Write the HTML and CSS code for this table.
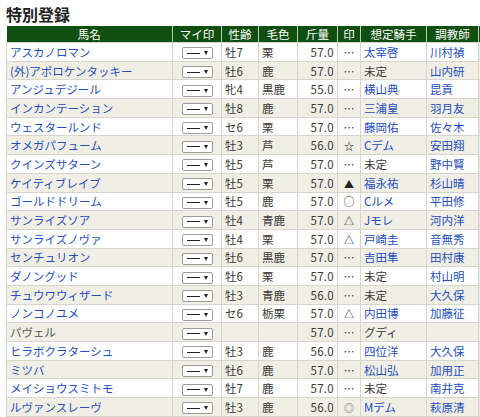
FILE: index.html
```html
<!DOCTYPE html>
<html lang="ja">
<head>
<meta charset="utf-8">
<link rel="stylesheet" href="styles.css">
</head>
<body>
<h1 class="title">特別登録</h1>
<table class="entries">
<colgroup>
<col class="c-name"><col class="c-my"><col class="c-sex"><col class="c-coat"><col class="c-wt"><col class="c-mark"><col class="c-jockey"><col class="c-trainer"><col class="c-tag">
</colgroup>
<thead>
<tr><th>馬名</th><th>マイ印</th><th>性齢</th><th>毛色</th><th>斤量</th><th>印</th><th>想定騎手</th><th>調教師</th><th></th></tr>
</thead>
<tbody>
<tr><td class="name"><a>アスカノロマン</a></td><td class="my"><span class="sel"><i></i><b></b></span></td><td>牡7</td><td>栗</td><td class="wt">57.0</td><td class="mk">…</td><td><a>太宰啓</a></td><td><a>川村禎</a></td><td class="tag cyan"></td></tr>
<tr><td class="name"><a>(外)アポロケンタッキー</a></td><td class="my"><span class="sel"><i></i><b></b></span></td><td>牡6</td><td>鹿</td><td class="wt">57.0</td><td class="mk">…</td><td>未定</td><td><a>山内研</a></td><td class="tag yellow"></td></tr>
<tr><td class="name"><a>アンジュデジール</a></td><td class="my"><span class="sel"><i></i><b></b></span></td><td>牝4</td><td>黒鹿</td><td class="wt">55.0</td><td class="mk">…</td><td><a>横山典</a></td><td><a>昆貢</a></td><td class="tag pink"></td></tr>
<tr><td class="name"><a>インカンテーション</a></td><td class="my"><span class="sel"><i></i><b></b></span></td><td>牡8</td><td>鹿</td><td class="wt">57.0</td><td class="mk">…</td><td><a>三浦皇</a></td><td><a>羽月友</a></td><td class="tag green"></td></tr>
<tr><td class="name"><a>ウェスタールンド</a></td><td class="my"><span class="sel"><i></i><b></b></span></td><td>セ6</td><td>栗</td><td class="wt">57.0</td><td class="mk">…</td><td><a>藤岡佑</a></td><td><a>佐々木</a></td><td class="tag pink"></td></tr>
<tr><td class="name"><a>オメガパフューム</a></td><td class="my"><span class="sel"><i></i><b></b></span></td><td>牡3</td><td>芦</td><td class="wt">56.0</td><td class="mk small">☆</td><td><a>Cデム</a></td><td><a>安田翔</a></td><td class="tag cyan"></td></tr>
<tr><td class="name"><a>クインズサターン</a></td><td class="my"><span class="sel"><i></i><b></b></span></td><td>牡5</td><td>芦</td><td class="wt">57.0</td><td class="mk">…</td><td>未定</td><td><a>野中賢</a></td><td class="tag green"></td></tr>
<tr><td class="name"><a>ケイティブレイブ</a></td><td class="my"><span class="sel"><i></i><b></b></span></td><td>牡5</td><td>栗</td><td class="wt">57.0</td><td class="mk small">▲</td><td><a>福永祐</a></td><td><a>杉山晴</a></td><td class="tag pink"></td></tr>
<tr><td class="name"><a>ゴールドドリーム</a></td><td class="my"><span class="sel"><i></i><b></b></span></td><td>牡5</td><td>鹿</td><td class="wt">57.0</td><td class="mk">○</td><td><a>Cルメ</a></td><td><a>平田修</a></td><td class="tag pink"></td></tr>
<tr><td class="name"><a>サンライズソア</a></td><td class="my"><span class="sel"><i></i><b></b></span></td><td>牡4</td><td>青鹿</td><td class="wt">57.0</td><td class="mk small">△</td><td><a>Jモレ</a></td><td><a>河内洋</a></td><td class="tag pink"></td></tr>
<tr><td class="name"><a>サンライズノヴァ</a></td><td class="my"><span class="sel"><i></i><b></b></span></td><td>牡4</td><td>栗</td><td class="wt">57.0</td><td class="mk small">△</td><td><a>戸崎圭</a></td><td><a>音無秀</a></td><td class="tag pink"></td></tr>
<tr><td class="name"><a>センチュリオン</a></td><td class="my"><span class="sel"><i></i><b></b></span></td><td>牡6</td><td>黒鹿</td><td class="wt">57.0</td><td class="mk">…</td><td><a>吉田隼</a></td><td><a>田村康</a></td><td class="tag cyan"></td></tr>
<tr><td class="name"><a>ダノングッド</a></td><td class="my"><span class="sel"><i></i><b></b></span></td><td>牡6</td><td>栗</td><td class="wt">57.0</td><td class="mk">…</td><td>未定</td><td><a>村山明</a></td><td class="tag cyan"></td></tr>
<tr><td class="name"><a>チュウワウィザード</a></td><td class="my"><span class="sel"><i></i><b></b></span></td><td>牡3</td><td>青鹿</td><td class="wt">56.0</td><td class="mk">…</td><td>未定</td><td><a>大久保</a></td><td class="tag cyan"></td></tr>
<tr><td class="name"><a>ノンコノユメ</a></td><td class="my"><span class="sel"><i></i><b></b></span></td><td>セ6</td><td>栃栗</td><td class="wt">57.0</td><td class="mk small">△</td><td><a>内田博</a></td><td><a>加藤征</a></td><td class="tag cyan"></td></tr>
<tr><td class="name">パヴェル</td><td class="my"><span class="sel"><i></i><b></b></span></td><td></td><td></td><td class="wt">57.0</td><td class="mk">…</td><td>グディ</td><td></td><td class="tag"></td></tr>
<tr><td class="name"><a>ヒラボクラターシュ</a></td><td class="my"><span class="sel"><i></i><b></b></span></td><td>牡3</td><td>鹿</td><td class="wt">56.0</td><td class="mk">…</td><td><a>四位洋</a></td><td><a>大久保</a></td><td class="tag pink"></td></tr>
<tr><td class="name"><a>ミツバ</a></td><td class="my"><span class="sel"><i></i><b></b></span></td><td>牡6</td><td>鹿</td><td class="wt">57.0</td><td class="mk">…</td><td><a>松山弘</a></td><td><a>加用正</a></td><td class="tag pink"></td></tr>
<tr><td class="name"><a>メイショウスミトモ</a></td><td class="my"><span class="sel"><i></i><b></b></span></td><td>牡7</td><td>鹿</td><td class="wt">57.0</td><td class="mk">…</td><td>未定</td><td><a>南井克</a></td><td class="tag pink"></td></tr>
<tr><td class="name"><a>ルヴァンスレーヴ</a></td><td class="my"><span class="sel"><i></i><b></b></span></td><td>牡3</td><td>鹿</td><td class="wt">56.0</td><td class="mk dot">◎</td><td><a>Mデム</a></td><td><a>萩原清</a></td><td class="tag pink"></td></tr>
</tbody>
</table>
</body>
</html>
```

FILE: styles.css
```css
html, body {
  margin: 0;
  padding: 0;
  background: #ffffff;
  overflow: hidden;
}
body {
  padding: 0 0 0 6px;
  font-family: "Noto Sans CJK JP", "Noto Sans", sans-serif;
  color: #3a3a3a;
  width: 600px;
}
.title {
  margin: 4px 0 2px 0;
  font-size: 16px;
  line-height: 20px;
  font-weight: bold;
  color: #222;
  letter-spacing: 0;
}
.entries {
  border-collapse: collapse;
  table-layout: fixed;
  width: 482px;
  font-size: 11.5px;
}
.c-name { width: 166px; }
.c-my { width: 49px; }
.c-sex { width: 37px; }
.c-coat { width: 39px; }
.c-wt { width: 40px; }
.c-mark { width: 23px; }
.c-jockey { width: 66px; }
.c-trainer { width: 52px; }
.c-tag { width: 10px; }

.entries th {
  background: #114f11;
  color: #ffffff;
  font-weight: normal;
  height: 16px;
  padding: 0;
  line-height: 14px;
  border-left: 1px solid #b9ccb9;
  text-align: center;
  font-size: 11.5px;
}
.entries th:first-child { border-left: none; }
.entries tbody tr { height: 18.7px; }
.entries thead tr { height: 16px; }
.entries td {
  padding: 1px 0 0 3px;
  border: 1px solid #d8d5cc;
  line-height: 13px;
  white-space: nowrap;
  overflow: hidden;
}
.entries tbody tr:nth-child(even) td { background: #f1eee6; }
.entries a { color: #1e4fbd; text-decoration: none; }
.entries td.name { padding-left: 3px; color: #555; }
.entries td.wt { text-align: right; padding: 1px 3px 0 0; letter-spacing: 0.3px; }
.entries td.mk { text-align: center; padding: 1px 0 0 0; font-size: 11px; color: #333; }
.entries td.mk.small { font-size: 10px; color: #222; }
.entries td.mk.dot { font-size: 10px; color: #666; }
.entries td.my { text-align: center; padding: 3px 0 0 0; line-height: 10px; }
.sel {
  display: inline-flex;
  align-items: center;
  justify-content: space-between;
  box-sizing: border-box;
  width: 31px;
  height: 12px;
  padding: 0 4px 0 4px;
  border: 1px solid #9c9c9c;
  border-radius: 2px;
  background: #ffffff;
  vertical-align: top;
}
.sel i {
  display: block;
  width: 13px;
  height: 1px;
  background: #222;
}
.sel b {
  display: block;
  width: 0;
  height: 0;
  border-left: 2px solid transparent;
  border-right: 2px solid transparent;
  border-top: 4px solid #222;
}
.entries td.tag { padding: 0; }
.entries tbody tr td.tag.cyan { background: #d3f5f7; }
.entries tbody tr td.tag.yellow { background: #fdf9b8; }
.entries tbody tr td.tag.pink { background: #f6d6f1; }
.entries tbody tr td.tag.green { background: #d2f3cf; }
```
